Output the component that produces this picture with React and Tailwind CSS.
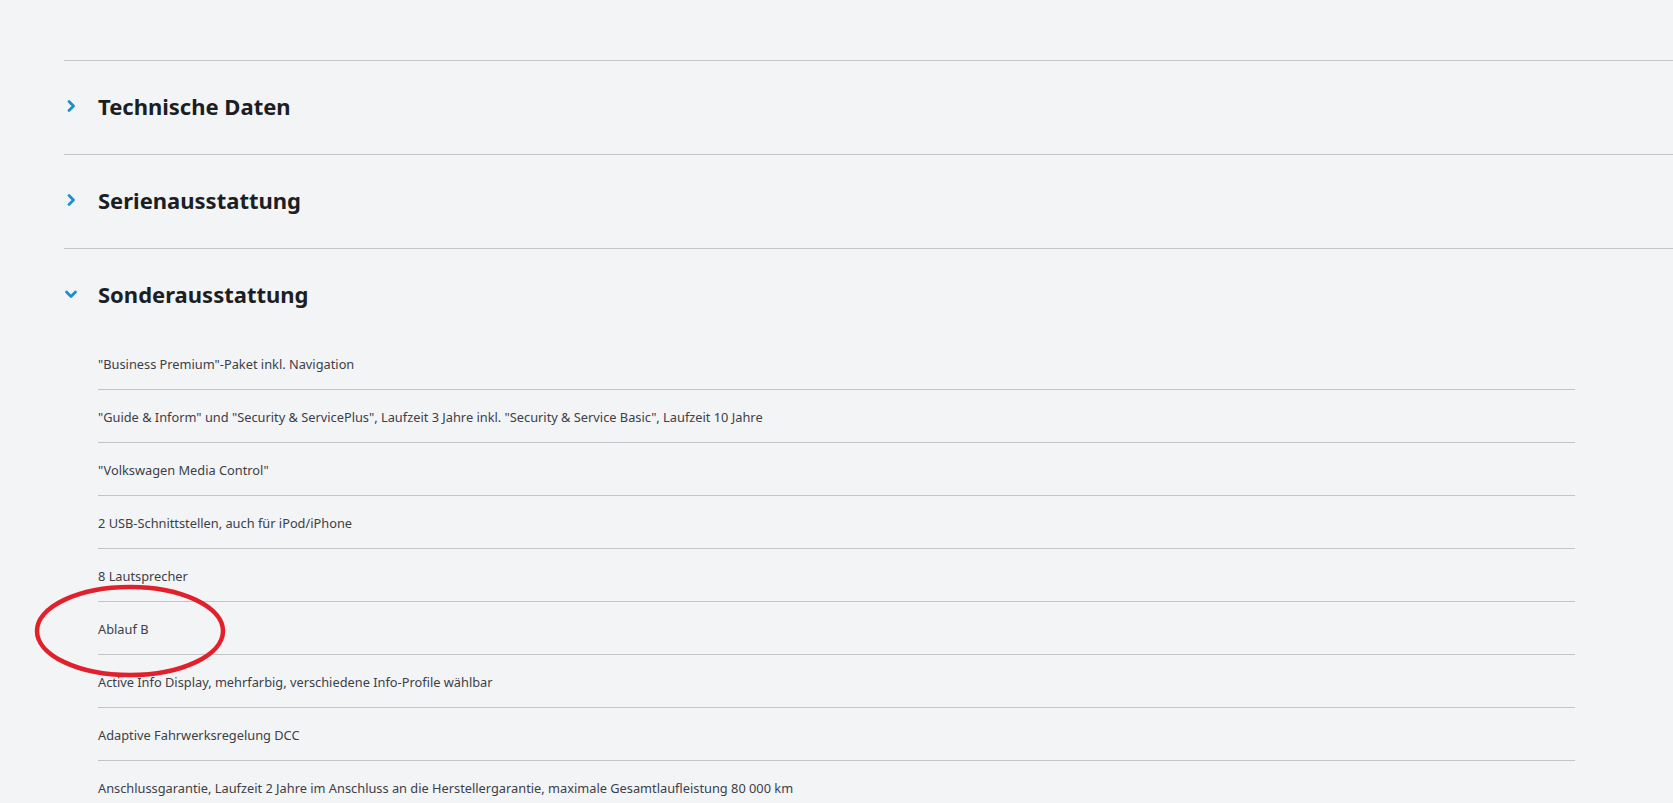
import React from "react";

const sections = [
  { title: "Technische Daten", open: false },
  { title: "Serienausstattung", open: false },
  { title: "Sonderausstattung", open: true },
];

const items = [
  '"Business Premium"-Paket inkl. Navigation',
  '"Guide & Inform" und "Security & ServicePlus", Laufzeit 3 Jahre inkl. "Security & Service Basic", Laufzeit 10 Jahre',
  '"Volkswagen Media Control"',
  "2 USB-Schnittstellen, auch für iPod/iPhone",
  "8 Lautsprecher",
  "Ablauf B",
  "Active Info Display, mehrfarbig, verschiedene Info-Profile wählbar",
  "Adaptive Fahrwerksregelung DCC",
  "Anschlussgarantie, Laufzeit 2 Jahre im Anschluss an die Herstellergarantie, maximale Gesamtlaufleistung 80 000 km",
];

function Chevron({ open }) {
  return (
    <svg width="14" height="14" viewBox="0 0 14 14" className="shrink-0">
      {open ? (
        <path d="M2.5 5 L7 9.5 L11.5 5" fill="none" stroke="#1d8fcb" strokeWidth="2.8" strokeLinecap="round" strokeLinejoin="round" />
      ) : (
        <path d="M5 2.5 L9.5 7 L5 11.5" fill="none" stroke="#1d8fcb" strokeWidth="2.8" strokeLinecap="round" strokeLinejoin="round" />
      )}
    </svg>
  );
}

export default function App() {
  return (
    <div
      className="relative min-h-[803px] w-full overflow-hidden bg-[#f3f4f6] pt-[60px] pl-[64px]"
      style={{ fontFamily: '"Noto Sans", "Open Sans", sans-serif' }}
    >
      {sections.map((s) => (
        <div key={s.title} className="border-t border-[#c2c4c6]">
          <div className="flex h-[93px] items-center gap-[20px] pb-[4px]">
            <Chevron open={s.open} />
            <h2 className="text-[22px] font-bold leading-none text-[#1b1e23]">{s.title}</h2>
          </div>
          {s.open && (
            <ul className="-mt-[5px] ml-[34px] w-[1477px]">
              {items.map((it) => (
                <li
                  key={it}
                  className="flex h-[53px] items-center border-b border-[#c2c4c6] pt-[3px] text-[12.8px] text-[#3c4048]"
                >
                  {it}
                </li>
              ))}
            </ul>
          )}
        </div>
      ))}
      <svg
        className="pointer-events-none absolute left-[30px] top-[581px]"
        width="200"
        height="100"
        viewBox="0 0 200 100"
      >
        <ellipse cx="100" cy="50" rx="93" ry="44" fill="none" stroke="#e2202c" strokeWidth="4.5" />
      </svg>
    </div>
  );
}
